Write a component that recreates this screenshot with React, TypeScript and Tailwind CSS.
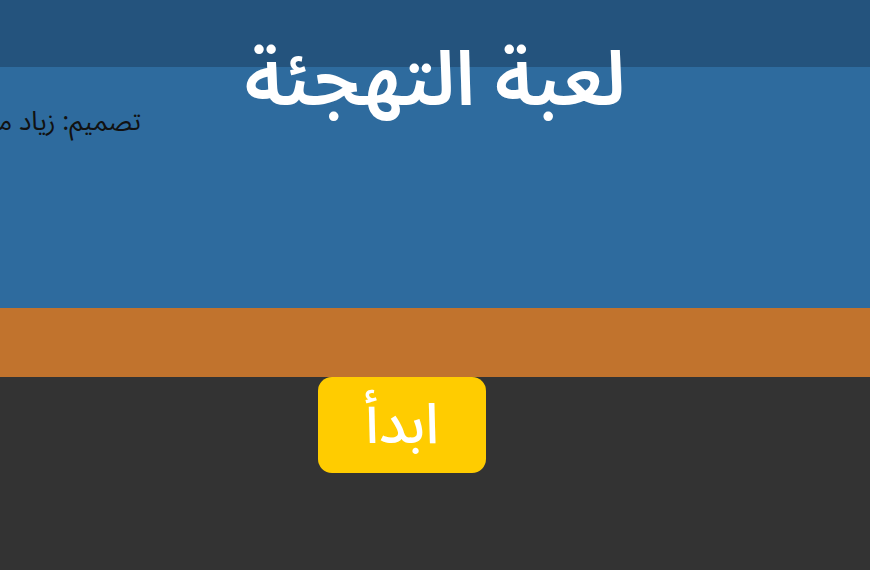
export default function App() {
  return (
    <div
      dir="rtl"
      className="flex h-[570px] w-[870px] flex-col overflow-hidden bg-[#333333]"
      style={{ fontFamily: '"Noto Sans Arabic", "Noto Sans", "DejaVu Sans", sans-serif' }}
    >
      <header className="h-[67px] shrink-0 bg-[#24537d]" />

      <section className="relative h-[241px] shrink-0 bg-[#2e6b9e]">
        <h1 className="-mt-[35px] text-center text-[76px] leading-[1.3] font-semibold text-white">
          لعبة التهجئة
        </h1>
        <div className="mr-auto -mt-[22px] w-[141px] whitespace-nowrap text-[26px] leading-none text-[#111111]">
          تصميم: زياد محمد
        </div>
      </section>

      <div className="h-[69px] shrink-0 bg-[#c1732d]" />

      <div className="flex justify-start pr-[384px]">
        <button className="flex h-[96px] w-[168px] items-center justify-center rounded-[14px] bg-[#ffcc00] text-[56px] font-medium text-white">
          ابدأ
        </button>
      </div>
    </div>
  )
}
